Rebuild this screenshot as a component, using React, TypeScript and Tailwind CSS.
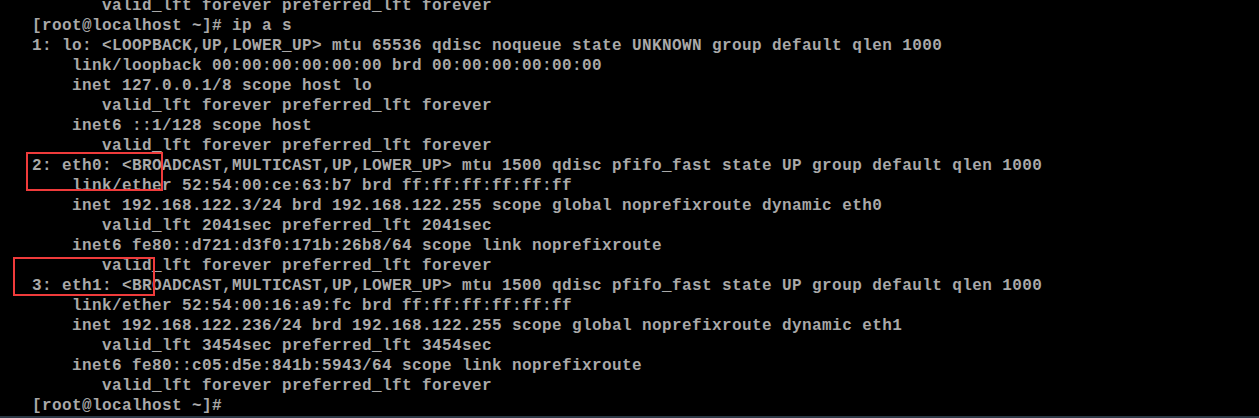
const lines = [
  "       valid_lft forever preferred_lft forever",
  "[root@localhost ~]# ip a s",
  "1: lo: <LOOPBACK,UP,LOWER_UP> mtu 65536 qdisc noqueue state UNKNOWN group default qlen 1000",
  "    link/loopback 00:00:00:00:00:00 brd 00:00:00:00:00:00",
  "    inet 127.0.0.1/8 scope host lo",
  "       valid_lft forever preferred_lft forever",
  "    inet6 ::1/128 scope host",
  "       valid_lft forever preferred_lft forever",
  "2: eth0: <BROADCAST,MULTICAST,UP,LOWER_UP> mtu 1500 qdisc pfifo_fast state UP group default qlen 1000",
  "    link/ether 52:54:00:ce:63:b7 brd ff:ff:ff:ff:ff:ff",
  "    inet 192.168.122.3/24 brd 192.168.122.255 scope global noprefixroute dynamic eth0",
  "       valid_lft 2041sec preferred_lft 2041sec",
  "    inet6 fe80::d721:d3f0:171b:26b8/64 scope link noprefixroute",
  "       valid_lft forever preferred_lft forever",
  "3: eth1: <BROADCAST,MULTICAST,UP,LOWER_UP> mtu 1500 qdisc pfifo_fast state UP group default qlen 1000",
  "    link/ether 52:54:00:16:a9:fc brd ff:ff:ff:ff:ff:ff",
  "    inet 192.168.122.236/24 brd 192.168.122.255 scope global noprefixroute dynamic eth1",
  "       valid_lft 3454sec preferred_lft 3454sec",
  "    inet6 fe80::c05:d5e:841b:5943/64 scope link noprefixroute",
  "       valid_lft forever preferred_lft forever",
  "[root@localhost ~]#",
];

export default function App() {
  return (
    <div className="w-[1259px] h-[418px] bg-black flex flex-col overflow-hidden">
      {/* console output */}
      <div className="relative flex-1 overflow-hidden">
        <pre className="-mt-1 pl-[32px] font-['Liberation_Mono','DejaVu_Sans_Mono',monospace] font-bold text-[16px] tracking-[0.4px] leading-[20px] text-[#a9a9a9] whitespace-pre">
          {lines.join("\n")}
        </pre>

        {/* highlight boxes */}
        <div className="absolute left-[26px] top-[152px] w-[137px] h-[39px] border-2 border-[#ef3b3b]" />
        <div className="absolute left-[13px] top-[257px] w-[142px] h-[39px] border-2 border-[#ef3b3b]" />
      </div>
      <div className="h-[2px] bg-[#2b3845]" />
    </div>
  );
}
